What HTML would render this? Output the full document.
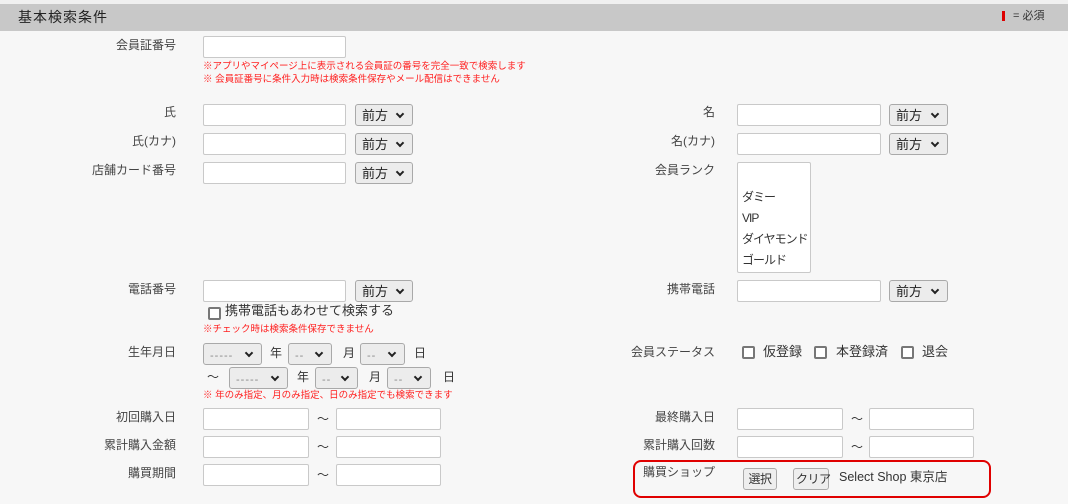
<!DOCTYPE html>
<html><head><meta charset="utf-8"><style>
*{box-sizing:border-box;margin:0;padding:0}
body{width:1078px;height:504px;background:#f7f7f7;position:relative;overflow:hidden;font-family:"Liberation Sans","Noto Sans CJK JP",sans-serif;font-size:12px;color:#333}
.a{position:absolute;white-space:nowrap;line-height:1}
.in{position:absolute;height:22px;background:#fff;border:1px solid #c9c9c9;border-radius:2px}
.sel{position:absolute;height:22px;background:#ececec;border:1px solid #a9a9a9;border-radius:3px;font-size:13px;color:#222;padding:4px 0 0 6px;line-height:1;white-space:nowrap}
.sel:after{content:"";position:absolute;right:9px;top:6px;width:4px;height:4px;border-right:2px solid #222;border-bottom:2px solid #222;transform:rotate(45deg)}
.d{color:#888;letter-spacing:1px;font-family:"Liberation Sans",sans-serif;font-size:11px}
.lbl{position:absolute;text-align:right;width:170px;line-height:1;font-size:12px;color:#444}
.r{color:#ff2020;font-size:9.5px}
.cb{position:absolute;width:13px;height:13px;border:2px solid #777;border-radius:2px;background:#fff}
.btn{position:absolute;height:22px;background:#eee;border:1px solid #aaa;border-radius:3px;font-size:12px;padding:4px 2px 0;line-height:1;white-space:nowrap;text-align:center;letter-spacing:-0.5px}
</style></head><body>
<div style="position:absolute;left:0;top:0;width:1078px;height:4px;background:#f0f0f0"></div>
<div style="position:absolute;left:0;top:4px;width:1068px;height:27px;background:#c8c8c8"></div>
<div style="position:absolute;left:1068px;top:0;width:10px;height:504px;background:#fff"></div>
<div class="a" style="left:18px;top:10px;font-size:14px;color:#222;letter-spacing:1px">基本検索条件</div>
<div style="position:absolute;left:1002px;top:11px;width:3px;height:10px;background:#d00"></div>
<div class="a" style="left:1013px;top:11px;font-size:11px;color:#333">= 必須</div>

<div class="lbl" style="left:6px;top:39px">会員証番号</div>
<div class="in" style="left:203px;top:36px;width:143px"></div>
<div class="a r" style="left:203px;top:62px">※アプリやマイページ上に表示される会員証の番号を完全一致で検索します</div>
<div class="a r" style="left:203px;top:75px">※ 会員証番号に条件入力時は検索条件保存やメール配信はできません</div>

<div class="lbl" style="left:6px;top:106px">氏</div>
<div class="in" style="left:203px;top:104px;width:143px"></div><div class="sel" style="left:355px;top:104px;width:58px">前方</div>
<div class="lbl" style="left:6px;top:135px">氏(カナ)</div>
<div class="in" style="left:203px;top:133px;width:143px"></div><div class="sel" style="left:355px;top:133px;width:58px">前方</div>
<div class="lbl" style="left:6px;top:164px">店舗カード番号</div>
<div class="in" style="left:203px;top:162px;width:143px"></div><div class="sel" style="left:355px;top:162px;width:58px">前方</div>

<div class="lbl" style="left:545px;top:106px">名</div>
<div class="in" style="left:737px;top:104px;width:144px"></div><div class="sel" style="left:889px;top:104px;width:59px">前方</div>
<div class="lbl" style="left:545px;top:135px">名(カナ)</div>
<div class="in" style="left:737px;top:133px;width:144px"></div><div class="sel" style="left:889px;top:133px;width:59px">前方</div>
<div class="lbl" style="left:545px;top:164px">会員ランク</div>
<div class="in" style="left:737px;top:162px;width:74px;height:111px"></div>
<div class="a" style="left:742px;top:187px;font-size:12px;line-height:21px;color:#333;letter-spacing:-1px">ダミー<br>VIP<br>ダイヤモンド<br>ゴールド</div>

<div class="lbl" style="left:6px;top:283px">電話番号</div>
<div class="in" style="left:203px;top:280px;width:143px"></div><div class="sel" style="left:355px;top:280px;width:58px">前方</div>
<div class="cb" style="left:208px;top:307px"></div>
<div class="a" style="left:225px;top:304px;font-size:13px;color:#333">携帯電話もあわせて検索する</div>
<div class="a r" style="left:203px;top:325px">※チェック時は検索条件保存できません</div>
<div class="lbl" style="left:545px;top:283px">携帯電話</div>
<div class="in" style="left:737px;top:280px;width:144px"></div><div class="sel" style="left:889px;top:280px;width:59px">前方</div>

<div class="lbl" style="left:6px;top:346px">生年月日</div>
<div class="sel" style="left:203px;top:343px;width:59px"><span class="d">-----</span></div>
<div class="a" style="left:270px;top:347px">年</div>
<div class="sel" style="left:288px;top:343px;width:44px"><span class="d">--</span></div>
<div class="a" style="left:343px;top:347px">月</div>
<div class="sel" style="left:360px;top:343px;width:45px"><span class="d">--</span></div>
<div class="a" style="left:414px;top:347px">日</div>
<div class="a" style="left:207px;top:371px">〜</div>
<div class="sel" style="left:229px;top:367px;width:59px"><span class="d">-----</span></div>
<div class="a" style="left:297px;top:371px">年</div>
<div class="sel" style="left:315px;top:367px;width:43px"><span class="d">--</span></div>
<div class="a" style="left:369px;top:371px">月</div>
<div class="sel" style="left:387px;top:367px;width:44px"><span class="d">--</span></div>
<div class="a" style="left:443px;top:371px">日</div>
<div class="a r" style="left:203px;top:391px">※ 年のみ指定、月のみ指定、日のみ指定でも検索できます</div>

<div class="lbl" style="left:545px;top:346px">会員ステータス</div>
<div class="cb" style="left:742px;top:346px"></div><div class="a" style="left:763px;top:345px;font-size:13px">仮登録</div>
<div class="cb" style="left:814px;top:346px"></div><div class="a" style="left:836px;top:345px;font-size:13px">本登録済</div>
<div class="cb" style="left:901px;top:346px"></div><div class="a" style="left:922px;top:345px;font-size:13px">退会</div>

<div class="lbl" style="left:6px;top:411px">初回購入日</div>
<div class="in" style="left:203px;top:408px;width:106px"></div><div class="a" style="left:317px;top:413px">〜</div><div class="in" style="left:336px;top:408px;width:105px"></div>
<div class="lbl" style="left:6px;top:439px">累計購入金額</div>
<div class="in" style="left:203px;top:436px;width:106px"></div><div class="a" style="left:317px;top:441px">〜</div><div class="in" style="left:336px;top:436px;width:105px"></div>
<div class="lbl" style="left:6px;top:467px">購買期間</div>
<div class="in" style="left:203px;top:464px;width:106px"></div><div class="a" style="left:317px;top:469px">〜</div><div class="in" style="left:336px;top:464px;width:105px"></div>

<div class="lbl" style="left:545px;top:411px">最終購入日</div>
<div class="in" style="left:737px;top:408px;width:106px"></div><div class="a" style="left:851px;top:413px">〜</div><div class="in" style="left:869px;top:408px;width:105px"></div>
<div class="lbl" style="left:545px;top:439px">累計購入回数</div>
<div class="in" style="left:737px;top:436px;width:106px"></div><div class="a" style="left:851px;top:441px">〜</div><div class="in" style="left:869px;top:436px;width:105px"></div>

<div style="position:absolute;left:633px;top:460px;width:358px;height:38px;border:2px solid #e00000;border-radius:8px"></div>
<div class="lbl" style="left:545px;top:466px">購買ショップ</div>
<div class="btn" style="left:743px;top:468px;width:34px">選択</div>
<div class="btn" style="left:793px;top:468px;width:36px">クリア</div>
<div class="a" style="left:839px;top:471px;font-size:12.5px;color:#333">Select Shop 東京店</div>
</body></html>
